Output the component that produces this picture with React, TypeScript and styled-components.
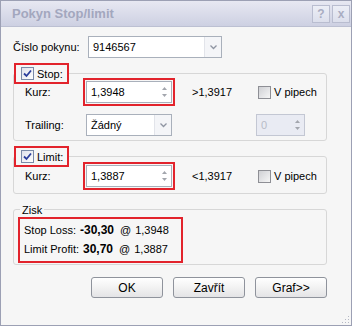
import React from 'react';
import styled, { createGlobalStyle } from 'styled-components';

const GlobalStyle = createGlobalStyle`
  html, body { margin: 0; padding: 0; background: #ffffff; }
  body {
    font-family: "Liberation Sans", Arial, sans-serif;
    font-size: 11px;
    color: #000;
  }
`;

const Window = styled.div`
  position: relative;
  width: 352px;
  height: 326px;
  box-sizing: border-box;
  border: 1px solid #9ca0b4;
  background: #f6f6f6;
  display: flex;
  flex-direction: column;
`;

const TitleBar = styled.div`
  height: 25px;
  flex: none;
  display: flex;
  align-items: center;
  justify-content: space-between;
  padding: 0 1px 0 11px;
  background: linear-gradient(#e7e8f2, #cdd0e2);
  border-bottom: 1px solid #bcc0d2;
`;

const Title = styled.span`
  font-weight: bold;
  font-size: 13px;
  color: #a3a7be;
`;

const TitleButtons = styled.div`
  display: flex;
  gap: 2px;
`;

const TitleButton = styled.div`
  width: 16px;
  height: 16px;
  border: 1px solid #b9bdd0;
  background: linear-gradient(#eceef6, #dcdfec);
  color: #a9adc2;
  font-weight: bold;
  font-size: 12px;
  display: flex;
  align-items: center;
  justify-content: center;
`;

const Body = styled.div`
  flex: 1;
  display: flex;
  flex-direction: column;
  padding: 9px 24px 0 12px;
`;

const TopRow = styled.div`
  display: flex;
  align-items: center;
`;

const TopLabel = styled.span`
  width: 75px;
`;

const Field = styled.div<{ $width: number; $disabled?: boolean; $red?: boolean }>`
  position: relative;
  box-sizing: border-box;
  width: ${p => p.$width}px;
  height: 22px;
  border: 1px solid ${p => (p.$disabled ? '#c3c7d3' : '#a9b0bb')};
  background: ${p => (p.$disabled ? '#e9ebf3' : '#ffffff')};
  color: ${p => (p.$disabled ? '#b8bcc8' : '#000')};
  display: flex;
  align-items: center;
  padding-left: 4px;
  outline: ${p => (p.$red ? '2px solid #e2232c' : 'none')};
  outline-offset: 1px;
`;

const FieldText = styled.span`
  flex: 1;
`;

const DropButton = styled.span`
  width: 16px;
  height: 100%;
  border-left: 1px solid #e2e4ea;
  background: #f4f5f8;
  display: flex;
  align-items: center;
  justify-content: center;
`;

const SpinArrows = styled.span`
  width: 14px;
  display: flex;
  flex-direction: column;
  align-items: center;
  gap: 4px;
`;

const Group = styled.fieldset<{ $gap: number }>`
  margin: ${p => p.$gap}px 0 0;
  padding: 0;
  border: 1px solid #d7d7d7;
  border-radius: 3px;
  min-width: 0;
`;

const Legend = styled.legend<{ $red?: boolean }>`
  margin-left: ${p => (p.$red ? 2 : 6)}px;
  padding: 0 ${p => (p.$red ? 4 : 2)}px 0 ${p => (p.$red ? 5 : 2)}px;
  height: 17px;
  display: flex;
  align-items: center;
  gap: 3px;
  outline: ${p => (p.$red ? '2px solid #e2232c' : 'none')};
`;

const GroupBody = styled.div<{ $pad: string }>`
  display: flex;
  flex-direction: column;
  padding: ${p => p.$pad};
`;

const GridRow = styled.div<{ $top: number }>`
  display: grid;
  grid-template-columns: 61px 86px 84px auto;
  align-items: center;
  margin-top: ${p => p.$top}px;
`;

const Compare = styled.span`
  padding-left: 20px;
`;

const CheckWrap = styled.label`
  display: flex;
  align-items: center;
  gap: 3px;
  padding-left: 2px;
`;

const Box = styled.span<{ $checked?: boolean }>`
  box-sizing: border-box;
  width: 13px;
  height: 13px;
  border: 1px solid ${p => (p.$checked ? '#7a8aa8' : '#8e8f95')};
  background: ${p =>
    p.$checked
      ? 'linear-gradient(135deg, #dfe2ec, #ffffff)'
      : 'linear-gradient(135deg, #cfd0d4, #f6f6f6)'};
  display: flex;
  align-items: center;
  justify-content: center;
`;

const Profit = styled.div`
  width: 159px;
  box-sizing: border-box;
  padding: 1px 0 1px 3px;
  outline: 2px solid #e2232c;
  outline-offset: 1px;
  display: flex;
  flex-direction: column;
`;

const ProfitLine = styled.div`
  display: flex;
  align-items: baseline;
  height: 19px;
  line-height: 19px;
  white-space: nowrap;
`;

const ProfitLabel = styled.span`
  margin-right: 4px;
`;

const Amount = styled.b`
  font-size: 12px;
  margin-right: 6px;
`;

const Price = styled.span`
  margin-left: 4px;
`;

const Buttons = styled.div`
  display: flex;
  justify-content: flex-end;
  gap: 10px;
  margin-top: 12px;
`;

const Button = styled.button`
  width: 72px;
  height: 21px;
  border: 1px solid #8f939c;
  border-radius: 3px;
  background: linear-gradient(#ffffff, #f2f2f2 50%, #e4e4e6);
  font-family: inherit;
  font-size: 12px;
  color: #000;
  padding: 0;
`;

const Grip = styled.svg`
  position: absolute;
  right: 1px;
  bottom: 1px;
`;

const Chevron = () => (
  <svg width="7" height="5" viewBox="0 0 7 5">
    <path d="M0.5 0.5 L3.5 3.5 L6.5 0.5" fill="none" stroke="#8f95a3" strokeWidth="1.3" />
  </svg>
);

const Arrows = () => (
  <SpinArrows>
    <svg width="5" height="3" viewBox="0 0 5 3">
      <path d="M0 3 L2.5 0 L5 3 Z" fill="#a3a6ad" />
    </svg>
    <svg width="5" height="3" viewBox="0 0 5 3">
      <path d="M0 0 L2.5 3 L5 0 Z" fill="#a3a6ad" />
    </svg>
  </SpinArrows>
);

const Check = ({ checked }: { checked?: boolean }) => (
  <Box $checked={checked}>
    {checked && (
      <svg width="9" height="9" viewBox="0 0 9 9">
        <path d="M1 4.5 L3.5 7 L8 1.5" fill="none" stroke="#2b3e9c" strokeWidth="1.8" />
      </svg>
    )}
  </Box>
);

export default function App() {
  return (
    <>
      <GlobalStyle />
      <Window>
        <TitleBar>
          <Title>Pokyn Stop/limit</Title>
          <TitleButtons>
            <TitleButton>?</TitleButton>
            <TitleButton>x</TitleButton>
          </TitleButtons>
        </TitleBar>
        <Body>
          <TopRow>
            <TopLabel>Číslo pokynu:</TopLabel>
            <Field $width={134}>
              <FieldText>9146567</FieldText>
              <DropButton><Chevron /></DropButton>
            </Field>
          </TopRow>

          <Group $gap={7}>
            <Legend $red>
              <Check checked />
              Stop:
            </Legend>
            <GroupBody $pad="0 0 4px 11px">
              <GridRow $top={-1}>
                <span>Kurz:</span>
                <Field $width={86} $red>
                  <FieldText>1,3948</FieldText>
                  <Arrows />
                </Field>
                <Compare>&gt;1,3917</Compare>
                <CheckWrap>
                  <Check />
                  V pipech
                </CheckWrap>
              </GridRow>
              <GridRow $top={11}>
                <span>Trailing:</span>
                <Field $width={86}>
                  <FieldText>Žádný</FieldText>
                  <DropButton><Chevron /></DropButton>
                </Field>
                <span />
                <Field $width={49} $disabled>
                  <FieldText>0</FieldText>
                  <Arrows />
                </Field>
              </GridRow>
            </GroupBody>
          </Group>

          <Group $gap={7}>
            <Legend $red>
              <Check checked />
              Limit:
            </Legend>
            <GroupBody $pad="0 0 6px 11px">
              <GridRow $top={0}>
                <span>Kurz:</span>
                <Field $width={86} $red>
                  <FieldText>1,3887</FieldText>
                  <Arrows />
                </Field>
                <Compare>&lt;1,3917</Compare>
                <CheckWrap>
                  <Check />
                  V pipech
                </CheckWrap>
              </GridRow>
            </GroupBody>
          </Group>

          <Group $gap={7}>
            <Legend>Zisk</Legend>
            <GroupBody $pad="2px 0 4px 7px">
              <Profit>
                <ProfitLine>
                  <ProfitLabel>Stop Loss:</ProfitLabel>
                  <Amount>-30,30</Amount>@<Price>1,3948</Price>
                </ProfitLine>
                <ProfitLine>
                  <ProfitLabel>Limit Profit:</ProfitLabel>
                  <Amount>30,70</Amount>@<Price>1,3887</Price>
                </ProfitLine>
              </Profit>
            </GroupBody>
          </Group>

          <Buttons>
            <Button>OK</Button>
            <Button>Zavřít</Button>
            <Button>Graf&gt;&gt;</Button>
          </Buttons>
        </Body>
        <Grip width="10" height="10" viewBox="0 0 10 10">
          <rect x="8" y="2" width="1" height="1" fill="#b5b8c4" />
          <rect x="5" y="5" width="1" height="1" fill="#b5b8c4" />
          <rect x="8" y="5" width="1" height="1" fill="#b5b8c4" />
          <rect x="2" y="8" width="1" height="1" fill="#b5b8c4" />
          <rect x="5" y="8" width="1" height="1" fill="#b5b8c4" />
          <rect x="8" y="8" width="1" height="1" fill="#b5b8c4" />
        </Grip>
      </Window>
    </>
  );
}
